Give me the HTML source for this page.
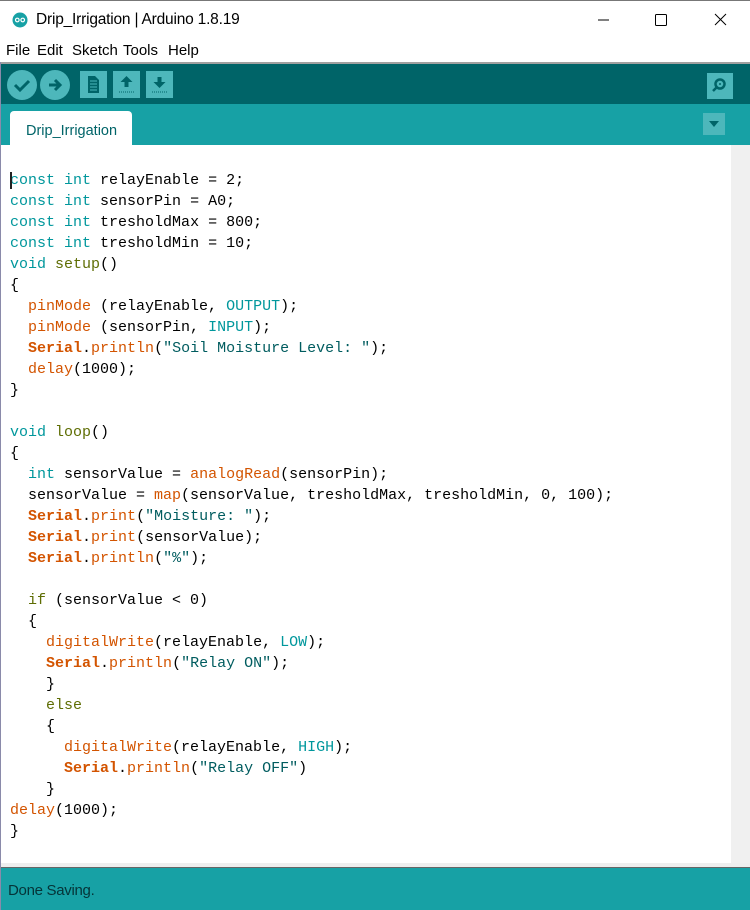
<!DOCTYPE html>
<html><head><meta charset="utf-8"><style>
*{margin:0;padding:0;box-sizing:border-box}
body{width:750px;height:910px;overflow:hidden;background:#fff;position:relative;font-family:"Liberation Sans",sans-serif}
.abs{position:absolute}
#title{left:0;top:0;width:750px;height:40px;background:#fff;border-top:1px solid #777}
#menu{left:0;top:40px;width:750px;height:22px;background:#fff;font-size:15px;color:#000}
#menu span{position:absolute;top:2px}
#tb{left:0;top:62px;width:750px;height:42px;background:#006468;border-top:2px solid #a0a0a0}
#tabs{left:0;top:104px;width:750px;height:41px;background:#17A1A5}
#tab{left:10px;top:7px;width:122px;height:34px;background:#fff;border-radius:4px 4px 0 0;color:#006468;font-size:14.5px;padding:12px 0 0 16px}
#editor{left:0;top:145px;width:731px;height:718px;background:#fff}
#sb{left:731px;top:145px;width:19px;height:718px;background:#f0f0f0}
#hbar{left:0;top:863px;width:750px;height:5px;background:#eeeeee;border-bottom:1px solid #666}
#status{left:0;top:868px;width:750px;height:42px;background:#17A1A5;color:#053438;font-size:15px;padding:14px 0 0 8px;letter-spacing:-0.3px}
pre{position:absolute;left:10px;top:170px;font-family:"Liberation Mono",monospace;font-size:15px;line-height:21px;color:#000}
.k{color:#00979C}.f{color:#D35400}.b{color:#D35400;font-weight:bold}.s{color:#005C5F}.o{color:#5E6D03}
#cur{left:10px;top:172px;width:2px;height:17px;background:#222}
#lb{left:0;top:62px;width:1px;height:848px;background:#8a8aaa}
</style></head><body>
<div id="title" class="abs">
 <svg class="abs" style="left:12px;top:11px" width="16" height="16"><circle cx="8" cy="8" r="7.5" fill="#17A1A5"/><path d="M3.5 8a1.8 1.8 0 1 0 3.6 0a1.8 1.8 0 1 0-3.6 0M8.9 8a1.8 1.8 0 1 0 3.6 0a1.8 1.8 0 1 0-3.6 0" stroke="#fff" stroke-width="1.2" fill="none"/></svg>
 <span class="abs" style="left:36px;top:10px;font-size:15.5px;color:#000;letter-spacing:-0.2px">Drip_Irrigation | Arduino 1.8.19</span>
 <svg class="abs" style="left:596px;top:10px" width="140" height="20"><path d="M2 9h11" stroke="#000" stroke-width="1"/><rect x="59.5" y="3.5" width="11" height="11" rx="1" fill="none" stroke="#000"/><path d="M119 3l11 11M130 3l-11 11" stroke="#000" stroke-width="1"/></svg>
</div>
<div id="menu" class="abs"><span style="left:6px">File</span><span style="left:37px">Edit</span><span style="left:72px">Sketch</span><span style="left:123px">Tools</span><span style="left:168px">Help</span></div>
<div id="tb" class="abs">
 <svg class="abs" style="left:0;top:0" width="750" height="40">
  <circle cx="22" cy="21" r="15" fill="#4DB7BB"/><path d="M15 21l5 5 9-9" stroke="#006468" stroke-width="3" fill="none"/>
  <circle cx="55" cy="21" r="15" fill="#4DB7BB"/><path d="M49 21h10M55 16l5 5-5 5" stroke="#006468" stroke-width="3" fill="none"/>
  <rect x="80" y="7" width="27" height="27" fill="#4DB7BB"/><path d="M88 12h7l4 4v13h-11z" fill="#006468"/><path d="M90 17h7M90 20h7M90 23h7M90 26h7" stroke="#4DB7BB" stroke-width="1"/>
  <rect x="113" y="7" width="27" height="27" fill="#4DB7BB"/><path d="M126.5 12l6 6h-4v5h-4v-5h-4z" fill="#006468"/><path d="M119 28h15" stroke="#006468" stroke-dasharray="1 1"/>
  <rect x="146" y="7" width="27" height="27" fill="#4DB7BB"/><path d="M159.5 24l6-6h-4v-5h-4v5h-4z" fill="#006468"/><path d="M152 28h15" stroke="#006468" stroke-dasharray="1 1"/>
  <rect x="707" y="9" width="26" height="26" fill="#4DB7BB"/><circle cx="720" cy="20" r="4.5" fill="none" stroke="#006468" stroke-width="2.5"/><path d="M717 23l-4 4" stroke="#006468" stroke-width="2.5"/><circle cx="720" cy="20" r="1" fill="#006468"/>
 </svg>
</div>
<div id="tabs" class="abs"><div id="tab" class="abs">Drip_Irrigation</div>
 <svg class="abs" style="left:703px;top:9px" width="22" height="22"><rect width="22" height="22" fill="#4DB7BB"/><path d="M6 8h10l-5 6z" fill="#006468"/></svg>
</div>
<div id="editor" class="abs"></div>
<div id="sb" class="abs"></div>
<pre><span class="k">const</span> <span class="k">int</span> relayEnable = 2;
<span class="k">const</span> <span class="k">int</span> sensorPin = A0;
<span class="k">const</span> <span class="k">int</span> tresholdMax = 800;
<span class="k">const</span> <span class="k">int</span> tresholdMin = 10;
<span class="k">void</span> <span class="o">setup</span>()
{
  <span class="f">pinMode</span> (relayEnable, <span class="k">OUTPUT</span>);
  <span class="f">pinMode</span> (sensorPin, <span class="k">INPUT</span>);
  <span class="b">Serial</span>.<span class="f">println</span>(<span class="s">"Soil Moisture Level: "</span>);
  <span class="f">delay</span>(1000);
}

<span class="k">void</span> <span class="o">loop</span>()
{
  <span class="k">int</span> sensorValue = <span class="f">analogRead</span>(sensorPin);
  sensorValue = <span class="f">map</span>(sensorValue, tresholdMax, tresholdMin, 0, 100);
  <span class="b">Serial</span>.<span class="f">print</span>(<span class="s">"Moisture: "</span>);
  <span class="b">Serial</span>.<span class="f">print</span>(sensorValue);
  <span class="b">Serial</span>.<span class="f">println</span>(<span class="s">"%"</span>);

  <span class="o">if</span> (sensorValue &lt; 0)
  {
    <span class="f">digitalWrite</span>(relayEnable, <span class="k">LOW</span>);
    <span class="b">Serial</span>.<span class="f">println</span>(<span class="s">"Relay ON"</span>);
    }
    <span class="o">else</span>
    {
      <span class="f">digitalWrite</span>(relayEnable, <span class="k">HIGH</span>);
      <span class="b">Serial</span>.<span class="f">println</span>(<span class="s">"Relay OFF"</span>)
    }
<span class="f">delay</span>(1000);
}</pre>
<div id="cur" class="abs"></div>
<div id="hbar" class="abs"></div>
<div id="status" class="abs">Done Saving.</div>
<div id="lb" class="abs"></div>
</body></html>
